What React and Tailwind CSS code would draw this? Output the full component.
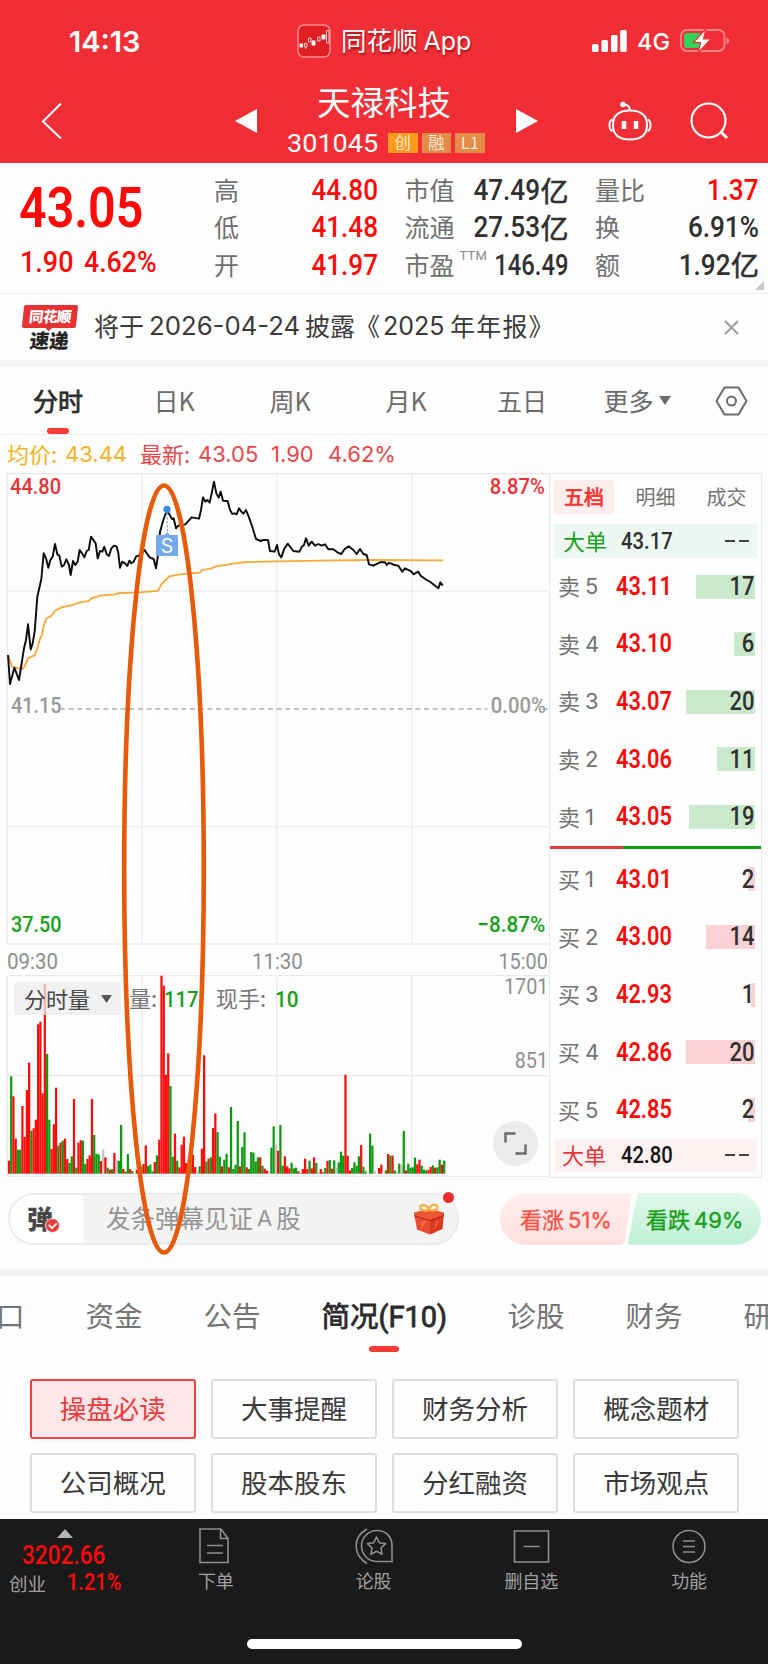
import React from 'react';

const PRICE =
  '24,900 30,987 43,938 57,975 72,880 78,855 84,808 92,883 98,865 104,830 112,725 124,672 131,595 138,610 145,638 151,615 158,605 165,567 172,598 178,602 185,635 192,630 199,613 207,630 212,660 219,618 226,630 233,620 239,585 246,595 253,607 260,588 266,585 273,545 287,565 293,610 300,588 307,590 313,575 320,598 327,603 334,580 342,572 350,575 355,595 360,638 367,620 375,625 382,633 388,617 394,625 401,620 408,605 420,600 434,585 442,598 450,608 461,612 468,640 474,600 480,530 490,495 501,465 508,478 516,492 521,490 528,520 535,512 556,508 575,487 597,491 603,465 609,427 616,440 622,435 629,443 635,415 642,380 649,415 656,428 662,410 669,437 683,438 690,465 697,477 704,475 710,478 717,460 724,470 730,476 738,465 746,485 755,510 768,552 782,558 790,555 804,555 810,588 824,590 831,570 837,598 844,607 852,583 863,566 880,588 898,590 906,575 912,570 918,550 926,572 935,560 945,572 955,567 965,572 975,568 985,583 1000,583 1012,592 1024,597 1034,582 1046,574 1060,585 1070,597 1080,582 1090,597 1100,600 1107,628 1120,632 1140,622 1155,622 1160,630 1166,624 1175,626 1182,630 1195,632 1207,650 1215,640 1235,650 1240,658 1255,650 1262,662 1280,675 1290,680 1315,700 1321,682 1328,692';

const AVERAGE =
  '24,900 36,935 66,943 73,935 84,910 104,900 112,880 120,852 126,840 132,808 140,790 155,782 165,767 185,757 210,752 240,742 265,738 275,730 300,722 340,719 360,714 410,713 474,708 484,688 508,664 540,658 600,653 606,645 635,640 648,634 700,626 740,621 830,619 960,617 1110,615 1330,616';

// one bar per minute: r = up, g = down, n = flat
const VOLUME =
  'r39 g292 r232 r105 g72 g72 r203 r110 r251 r333 g129 r136 r162 r448 r456 r241 r569 g359 g162 r74 r148 r258 g84 r93 g99 r105 r44 g32 g52 r224 g18 r93 r100 g99 g29 r44 r55 r224 g116 g60 g58 r38 n72 r49 g18 r12 g14 r62 n42 g39 g146 r14 g6 g59 r14 g8 n2 r12 r6 g22 r29 r85 g23 g27 g7 r35 g55 r102 r594 r564 r297 r361 g263 g51 r120 g39 r19 r87 r111 r32 r22 g27 r57 r20 n7 g22 r75 r355 g36 r45 g49 r137 r181 g125 g51 r22 g42 g60 r19 g200 g14 g27 g158 r22 g80 g124 r19 g14 g65 g63 g37 g49 r49 g24 r15 r9 n7 g78 g142 n87 r69 g146 g24 r52 r22 r16 g33 g16 g18 r7 g2 r14 r45 r14 g39 r16 r49 g32 n4 r14 r4 g17 r38 g41 r15 g40 n17 g34 g66 g54 r297 r54 r10 g17 g34 g24 g52 r86 g21 g7 n0 g120 g84 n10 n0 r17 r27 n0 g10 r59 g54 r54 g10 n6 g30 n27 g128 r10 g30 g18 g19 g48 r28 r42 g24 g12 g10 r12 r20 g25 r18 g19 g42 r27 g39'.split(' ');

const BAR_COLORS = { r: '#fe0b0b', g: '#0c9b10', n: '#c4c4c4' };

const SELLS = [
  ['卖', 5, '43.11', 17],
  ['卖', 4, '43.10', 6],
  ['卖', 3, '43.07', 20],
  ['卖', 2, '43.06', 11],
  ['卖', 1, '43.05', 19],
];

const BUYS = [
  ['买', 1, '43.01', 2],
  ['买', 2, '43.00', 14],
  ['买', 3, '42.93', 1],
  ['买', 4, '42.86', 20],
  ['买', 5, '42.85', 2],
];

const QUOTES = [
  [
    ['高', '44.80', '', 'text-[#fe0808]'],
    ['低', '41.48', '', 'text-[#fe0808]'],
    ['开', '41.97', '', 'text-[#fe0808]'],
  ],
  [
    ['市值', '47.49', '亿', 'text-[#303030]'],
    ['流通', '27.53', '亿', 'text-[#303030]'],
    ['市盈', '146.49', '', 'text-[#303030]'],
  ],
  [
    ['量比', '1.37', '', 'text-[#fe0808]'],
    ['换', '6.91%', '', 'text-[#303030]'],
    ['额', '1.92', '亿', 'text-[#303030]'],
  ],
];

const SECTIONS = ['操盘必读', '大事提醒', '财务分析', '概念题材', '公司概况', '股本股东', '分红融资', '市场观点'];

const StatusBar = () => (
  <div className="flex h-[78px] items-center pt-1">
    <div className="w-[297px] pl-[69px] font-['Inter'] text-[29px] leading-none font-semibold">14:13</div>
    <svg className="h-[34px] w-[34px]" viewBox="0 0 34 34" fill="none">
      <rect x="1" y="1" width="32" height="32" rx="6" fill="#e01f22" stroke="#fa8d8f" strokeWidth="1.5" />
      <path d="M3 20h2.500v3H3zM15 17h3v4h-3zM25 11h3v4h-3z" fill="#fff" stroke="#fff" />
      <path d="M7.500 19.500h2.500v3.500H7.500zM8.700 23v2M11.500 14h2.500v4h-2.500zM20.500 13h2.500v4h-2.500zM29.500 6.500h2.500v12.500h-2.500z" stroke="#f9c5c5" />
    </svg>
    <div className="-mt-[3px] ml-[10px] text-[25.5px] leading-none whitespace-nowrap [text-shadow:1px_2px_2px_rgba(90,0,0,0.55)]">
      同花顺<span className="ml-[6px] font-['Inter'] text-[25px]">App</span>
    </div>
    <div className="ml-auto flex items-center pr-[38px]">
      <svg className="h-[22px] w-[35px]" viewBox="0 0 35 22" fill="#fff">
        <rect x="0" y="14" width="6.500" height="8" rx="1.500" />
        <rect x="9.500" y="10" width="6.500" height="12" rx="1.500" />
        <rect x="19" y="5" width="6.500" height="17" rx="1.500" />
        <rect x="28.200" y="0" width="6.500" height="22" rx="1.500" />
      </svg>
      <span className="ml-[10px] w-[33px] pt-[2px] font-['Inter'] text-[23.5px] leading-none font-medium">4G</span>
      <svg className="ml-[10px] h-[26px] w-[50px]" viewBox="0 0 50 26">
        <rect x="1" y="2" width="43.500" height="21" rx="6" fill="none" stroke="#fa8589" strokeWidth="1.800" />
        <path d="M46.500 9.500q3 1 3 3.200t-3 3.300z" fill="#fa8589" />
        <rect x="4" y="5" width="17" height="15" rx="3" fill="#34d158" />
        <path d="M26 0.500L13.500 14.500h7l-2.500 10.500L31 11h-7.500z" fill="#fff" stroke="#f12e36" strokeWidth="1.200" />
      </svg>
    </div>
  </div>
);

const TitleBar = () => (
  <div className="flex h-[85px] items-start">
    <svg className="mt-[24px] ml-[41px] h-[38px] w-[21px]" viewBox="0 0 21 38" fill="none" stroke="#fff" strokeWidth="2">
      <path d="M20 1.500L2 19.500l18 17" />
    </svg>
    <svg className="mt-[31px] ml-[173px] h-[24px] w-[22px]" viewBox="0 0 22 24" fill="#fff">
      <path d="M22 0v24L0 12z" />
    </svg>
    <div className="ml-[30px] w-[198px]">
      <div className="mt-[3px] ml-[30px] text-[33.5px] leading-[40px] whitespace-nowrap">天禄科技</div>
      <div className="mt-[8px] flex items-center">
        <span className="w-[101px] font-['Roboto'] text-[26.5px] leading-[28px]">
          <span className="inline-block origin-left scale-x-[1.02]">301045</span>
        </span>
        <div className="flex gap-[4px] text-[16.5px] leading-[19px] text-[#ffe9d8]">
          <span className="h-[20px] w-[29.500px] bg-[#fd9a1b] text-center">创</span>
          <span className="h-[20px] w-[29.500px] bg-[#e38b48] text-center">融</span>
          <span className="h-[20px] w-[29.500px] bg-[#e38b48] text-center">L1</span>
        </div>
      </div>
    </div>
    <svg className="mt-[31px] ml-[31px] h-[24px] w-[22px]" viewBox="0 0 22 24" fill="#fff">
      <path d="M0 0v24L22 12z" />
    </svg>
    <svg className="mt-[23px] ml-[70px] h-[40px] w-[44px]" viewBox="0 0 44 40" fill="none" stroke="#fff" strokeWidth="2">
      <path d="M22 9.500c11 0 17 4.500 17 14.500S33 38.500 22 38.500 5 34 5 24 11 9.500 22 9.500z" />
      <path d="M4.500 18.500C.5 19.500.5 29 4.500 30M39.500 18.500c4 1 4 10.500 0 11.500M15 3.500c4.500 0 7 1.500 7 6" />
      <circle cx="15" cy="3.500" r="1.800" fill="#fff" />
      <path d="M16 20v8M28 20v8" strokeWidth="4.500" />
    </svg>
    <svg className="mt-[24px] ml-[38px] h-[38px] w-[38px]" viewBox="0 0 38 38" fill="none" stroke="#fff" strokeWidth="2.200">
      <circle cx="18.500" cy="18.500" r="17" />
      <path d="M30.500 29.500l6.500 6.500" strokeWidth="2.800" />
    </svg>
  </div>
);

const Quotes = () => (
  <div className="relative flex h-[131px] border-b border-[#ececec] pr-[8px]">
    <div className="w-[214px] font-['Roboto'] text-[#fe0808]">
      <div className="mt-[16px] ml-[19px] h-[58px] origin-left scale-x-[0.88] text-[55px] leading-[58px] font-semibold">43.05</div>
      <div className="mt-[9px] ml-[20px] flex text-[29px] leading-[32px] font-medium">
        <span className="w-[64px] origin-left scale-x-[0.93]">1.90</span>
        <span className="origin-left scale-x-[0.92]">4.62%</span>
      </div>
    </div>
    {QUOTES.map((col, i) => (
      <div key={i} className={`w-[164px] pt-[9px] ${i ? 'ml-[26.500px]' : ''}`}>
        {col.map(([label, value, unit, color]) => (
          <div key={label} className="flex h-[37.300px] items-center justify-between">
            <span className="relative -top-px text-[25px] leading-none text-[#707070]">
              {label}
              {label === '市盈' && (
                <sup className="absolute top-[-3px] left-[55px] font-['Roboto'] text-[13px] leading-none tracking-[0.200px] text-[#8a8a8a]">TTM</sup>
              )}
            </span>
            <span className={`flex items-center leading-none ${color}`}>
              <span className={`origin-right font-['Roboto'] text-[29px] font-medium ${value.length > 5 ? 'scale-x-[0.82]' : 'scale-x-[0.9]'}`}>{value}</span>
              {unit && <span className="relative -top-px text-[28px] [-webkit-text-stroke:0.6px]">{unit}</span>}
            </span>
          </div>
        ))}
      </div>
    ))}
    <svg className="absolute right-[4px] bottom-[3px] h-[9px] w-[9px]" viewBox="0 0 9 9">
      <path d="M9 0v9H0z" fill="#c8c8c8" />
    </svg>
  </div>
);

const News = () => (
  <div className="flex h-[66px] items-center">
    <div className="ml-[23px] w-[71px]">
      <div className="relative h-[23px] w-[54px] -skew-x-6 rounded-[2px] bg-[#e63233] text-center text-[14.5px] leading-[22px] font-black text-white">
        <span className="inline-block tracking-[-0.500px]">同花顺</span>
        <span className="absolute bottom-[-2px] left-[24px] h-[6px] w-[6px] rotate-45 bg-[#e63233]" />
      </div>
      <div className="mt-[2px] ml-[7px] h-[19px] w-[44px] -skew-x-6 text-[19.5px] leading-[19px] font-black text-[#252525]">速递</div>
    </div>
    <div className="-mt-[3px] flex text-[25px] leading-none whitespace-nowrap text-[#3a3a3a]">
      <span>将于</span>
      <span className="mr-[6px] ml-[5px] w-[150px] pt-px font-['Inter'] text-[25px]"><span className="inline-block origin-left scale-x-[1.03]">2026-04-24</span></span>
      <span className="w-[74px]">披露《</span>
      <span className="mr-[4px] ml-[4px] w-[63px] pt-px font-['Inter'] text-[25px]">2025</span>
      <span className="tracking-[1.200px]">年年报》</span>
    </div>
    <svg className="mr-[29px] ml-auto h-[15px] w-[15px]" viewBox="0 0 15 15" stroke="#999" strokeWidth="1.800">
      <path d="M1 1l13 13M14 1L1 14" />
    </svg>
  </div>
);

const ChartTabs = () => (
  <div className="flex h-[68px] items-center border-b border-[#ececec] text-[25px] leading-none text-[#6b6b6b]">
    <div className="relative w-[116px] text-center text-[#2b2b2b] [-webkit-text-stroke:0.8px]">
      分时
      <span className="absolute bottom-[-21px] left-[47px] h-[6px] w-[22px] rounded-[3px] bg-[#fb3a33]" />
    </div>
    {['日K', '周K', '月K', '五日'].map((t) => (
      <div key={t} className="w-[116px] text-center">{t}</div>
    ))}
    <div className="flex w-[114px] items-center justify-center">
      更多
      <svg className="ml-[5px] h-[9px] w-[12px]" viewBox="0 0 12 9" fill="#6b6b6b"><path d="M0 0h12L6 9z" /></svg>
    </div>
    <svg className="ml-[21px] h-[30px] w-[33px]" viewBox="0 0 33 30" fill="none" stroke="#6b6b6b" strokeWidth="2">
      <path d="M9.500 1.500h14L31.500 15l-8 13.500h-14L1.500 15z" strokeLinejoin="round" />
      <circle cx="16.500" cy="15" r="4.500" />
    </svg>
  </div>
);

const PriceChart = () => (
  <div className="relative h-[472px] font-['Roboto'] text-[22px] leading-none font-medium">
    <svg className="block h-[472px] w-[549px]" viewBox="0 354 1647 1416" fill="none">
      <path d="M22 354V1767M426 354V1767M830 354V1767M1235 354V1767M22 708H1647M22 1415H1647M22 1767H1647" stroke="#ededed" strokeWidth="4" />
      <path d="M22 355.500H1647" stroke="#e8e8e8" strokeWidth="4" />
      <path d="M180 1062H1462M1628 1062H1647" stroke="#888" strokeWidth="3.500" strokeDasharray="15 11" />
      <polyline points={AVERAGE} stroke="#f8a93a" strokeWidth="5.500" />
      <polyline points={PRICE} stroke="#0c0c0c" strokeWidth="5.800" strokeLinejoin="round" />
      <path d="M502 475V540" stroke="#7fb0f2" strokeWidth="4" strokeDasharray="6 6" />
      <path d="M490 545l12-14 12 14z" fill="#72a8f0" />
      <circle cx="501" cy="463" r="11" fill="#3f8ae8" />
    </svg>
    <span className="absolute top-[62px] left-[156px] h-[21px] w-[22px] bg-[#74a9ef] text-center font-['Inter'] text-[19.5px] leading-[22px] font-normal text-white">S</span>
    <span className="absolute top-[3px] left-[10px] origin-left scale-x-[0.91] text-[#ea3439]">44.80</span>
    <span className="absolute top-[3px] right-[4px] origin-right scale-x-[0.92] text-[#ea3439]">8.87%</span>
    <span className="absolute top-[222px] left-[11px] origin-left scale-x-[0.9] text-[#9a9a9a]">41.15</span>
    <span className="absolute top-[222px] right-[3px] origin-right scale-x-[0.92] text-[#9a9a9a]">0.00%</span>
    <span className="absolute top-[441px] left-[11px] origin-left scale-x-[0.9] text-[#17a01b]">37.50</span>
    <span className="absolute top-[441px] right-[4px] origin-right scale-x-[0.94] text-[#17a01b]">−8.87%</span>
  </div>
);

const VolumeChart = () => (
  <div className="relative h-[202px]">
    <svg className="block h-[202px] w-[549px]" viewBox="0 226 1647 606" fill="none">
      <path d="M22 228V830M426 228V830M830 228V830M1235 228V830M22 228H1647M22 528H1647M22 830H1647" stroke="#eaeaea" strokeWidth="4" />
      {VOLUME.map((v, i) => {
        const h = Number(v.slice(1));
        return <rect key={i} x={23.5 + i * 6.73} y={822 - h} width="6.730" height={h} fill={BAR_COLORS[v[0]]} />;
      })}
    </svg>
    <div className="absolute top-[7px] left-[14px] flex h-[33px] w-[107px] items-center rounded-[3px] bg-[#ececec]/75 pb-[2px] pl-[10px] text-[22px] leading-none text-[#4a4a4a]">
      分时量
      <svg className="mt-[2px] ml-[11px] h-[8px] w-[11px]" viewBox="0 0 11 8" fill="#555"><path d="M0 0h11L5.500 8z" /></svg>
    </div>
    <div className="absolute top-[11px] left-[129px] flex text-[22px] leading-none text-[#757575]">
      <span className="w-[35px] whitespace-nowrap">量:</span>
      <span className="w-[52px] pt-[2px] font-['Roboto'] text-[22.5px] text-[#17a01b]"><span className="inline-block origin-left scale-x-[0.9] font-medium">117</span></span>
      <span className="w-[59px] whitespace-nowrap">现手:</span>
      <span className="pt-[2px] font-['Roboto'] text-[22.5px] text-[#17a01b]"><span className="inline-block origin-left scale-x-[0.92] font-medium">10</span></span>
    </div>
    <span className="absolute top-[1px] right-[1px] origin-right scale-x-[0.9] font-['Roboto'] text-[22px] leading-none text-[#8f8f8f]">1701</span>
    <span className="absolute top-[75px] right-[1px] origin-right scale-x-[0.9] font-['Roboto'] text-[22px] leading-none text-[#8f8f8f]">851</span>
    <div className="absolute top-[146px] left-[493px] flex h-[45px] w-[45px] items-center justify-center rounded-full bg-[#ebebeb]">
      <svg className="h-[23px] w-[23px]" viewBox="0 0 23 23" fill="none" stroke="#6a6a6a" strokeWidth="2.500">
        <path d="M1.500 10.500v-9h10M21.500 12.500v9h-10" />
      </svg>
    </div>
  </div>
);

const DepthRow = ({ row, barColor }) => {
  const [side, level, price, count] = row;
  return (
    <div className="relative flex h-[57.600px] items-center pr-[7px] pb-[1px] pl-[8px] leading-none">
      <span className="absolute top-[16.500px] right-[6.500px] h-[24px]" style={{ width: count * 3.45, backgroundColor: barColor }} />
      <span className="w-[27px] pb-[2px] text-[22px] text-[#727272]">{side}</span>
      <span className="w-[31px] font-['Inter'] text-[22px] text-[#727272]">{level}</span>
      <span className="origin-left scale-x-[0.87] font-['Roboto'] text-[25px] font-semibold text-[#fe0808]">{price}</span>
      <span className="relative ml-auto origin-right scale-x-[0.88] font-['Roboto'] text-[25px] font-medium text-[#303030]">{count}</span>
    </div>
  );
};

const Depth = () => (
  <div className="w-[213px] border border-[#e8e8e8]">
    <div className="flex h-[50px] items-center pb-[4px] pl-[4px] text-[20px] leading-none text-[#757575]">
      <span className="flex h-[34px] w-[60px] items-center justify-center rounded-[2px] bg-[#fdeeed] pb-px text-[#fa322f] [-webkit-text-stroke:0.7px]">五档</span>
      <span className="w-[83px] pb-px text-center">明细</span>
      <span className="w-[59px] pb-px text-center">成交</span>
    </div>
    <div className="mx-[4px] flex h-[34px] items-center bg-[#eef8f3] pr-[8px] pl-[9px] text-[22px] leading-none">
      <span className="w-[58px] pb-[2px] text-[#17a01b]">大单</span>
      <span className="origin-left scale-x-[0.88] font-['Roboto'] text-[23px] font-medium text-[#303030]">43.17</span>
      <span className="ml-auto flex gap-[4px]">
        <i className="h-[2px] w-[10px] bg-[#444]" /><i className="h-[2px] w-[10px] bg-[#444]" />
      </span>
    </div>
    {SELLS.map((r) => <DepthRow key={r[1]} row={r} barColor="#cae9cb" />)}
    <div className="mb-[2px] flex h-[3px]">
      <div className="w-[73px] bg-[#e43a3c]" />
      <div className="flex-1 bg-[#0c9b10]" />
    </div>
    {BUYS.map((r) => <DepthRow key={r[1]} row={r} barColor="#fad2d3" />)}
    <div className="mx-[4px] flex h-[33px] items-center bg-[#fef1f1] pr-[8px] pl-[8px] text-[22px] leading-none">
      <span className="w-[59px] pb-[2px] text-[#ea3439]">大单</span>
      <span className="origin-left scale-x-[0.88] font-['Roboto'] text-[23px] font-medium text-[#151515]">42.80</span>
      <span className="ml-auto flex gap-[4px]">
        <i className="h-[2px] w-[10px] bg-[#444]" /><i className="h-[2px] w-[10px] bg-[#444]" />
      </span>
    </div>
  </div>
);

const Danmaku = () => (
  <div className="flex h-[91px] items-start pt-[15px] pr-[7px] pl-[8px]">
    <div className="relative flex h-[52px] w-[451px] rounded-full border-2 border-[#ececec] bg-[#f4f4f4]">
      <div className="relative h-full w-[73px] rounded-l-full bg-white pl-[17px] text-[26px] leading-[45px] font-black text-[#484848]">
        弹
        <svg className="absolute top-[23px] left-[35px] h-[15px] w-[15px]" viewBox="0 0 14 14">
          <circle cx="7" cy="7" r="6.500" fill="#ea3b3c" stroke="#fff" strokeWidth="0.8" />
          <path d="M3.500 6.500l3 3 4.500-4.500" fill="none" stroke="#fff" strokeWidth="1.600" />
        </svg>
      </div>
      <div className="flex items-center pb-[2px] pl-[23px] text-[24.5px] leading-none whitespace-nowrap text-[#959595]">
        发条弹幕见证<span className="mx-[4px] font-['Inter'] text-[22px]">A</span>股
      </div>
      <svg className="absolute top-[7px] left-[402px] h-[34px] w-[34px]" viewBox="0 0 34 34">
        <path d="M2 11l16 5v16.500L5 27.500z" fill="#ea4a2d" />
        <path d="M18 16l14-5-1.500 16L18 32.500z" fill="#dc3823" />
        <path d="M2 10.500L17 7l15 3.500-.3 3L18 18.500 2.300 14z" fill="#ee5536" />
        <path d="M2.300 14L18 18.500l14-5" fill="none" stroke="#b92318" />
        <path d="M9 20l6-2-6 10zM27 18l-5 12 2-11z" fill="#f58a4a" opacity="0.5" />
        <path d="M17 8C11 9.500 7 7 8.500 4.500s7-2 8.500 3.500c1-5.500 6-6.500 8-4S24 9.500 17 8z" fill="none" stroke="#f3b040" strokeWidth="2.300" />
      </svg>
      <span className="absolute top-[-3px] right-[3px] h-[11px] w-[11px] rounded-full bg-[#e8302f]" />
    </div>
    <div className="relative ml-auto h-[52px] w-[261px] leading-[50px]">
      <svg className="block h-[52px] w-[261px]" viewBox="0 0 262 52">
        <defs>
          <linearGradient id="up" x1="0" y1="0" x2="0" y2="1">
            <stop offset="0" stopColor="#feefee" /><stop offset="1" stopColor="#fde0dd" />
          </linearGradient>
          <linearGradient id="down" x1="0" y1="0" x2="0" y2="1">
            <stop offset="0" stopColor="#e0f8eb" /><stop offset="1" stopColor="#c0f0d6" />
          </linearGradient>
        </defs>
        <path d="M26 0h103q4 0 3 4l-7 44q-1 4-5 4H26a26 26 0 0 1 0-52z" fill="url(#up)" />
        <path d="M142 0h94a26 26 0 0 1 0 52H132q-4 0-3-4l8-44q1-4 5-4z" fill="url(#down)" />
      </svg>
      <div className="absolute inset-0 flex text-[22px] whitespace-nowrap">
        <span className="w-[127px] pl-[20px] text-[#fb5146] [-webkit-text-stroke:0.3px]">看涨<span className="ml-[4px] font-['Inter'] text-[22px]">51%</span></span>
        <span className="pl-[19px] text-[#17a01b] [-webkit-text-stroke:0.4px]">看跌<span className="ml-[4px] font-['Inter'] text-[22px]">49%</span></span>
      </div>
    </div>
  </div>
);

const NavItem = ({ label, children }) => (
  <div className="flex flex-1 flex-col items-center pt-[8px]">
    <svg className="h-[38px] w-[40px]" viewBox="0 0 40 38" fill="none" stroke="#8e8e8e" strokeWidth="1.600">{children}</svg>
    <span className="mt-[6px] text-[18px] leading-[18px] text-[#a0a0a0]">{label}</span>
  </div>
);

const BottomBar = () => (
  <div className="flex h-[146px] flex-col bg-[#1a1a1a]">
    <div className="flex h-[80px]">
      <div className="w-[137px] font-['Roboto'] text-[#fe0808]">
        <svg className="mt-[10px] ml-[57px] h-[9px] w-[16px]" viewBox="0 0 16 9" fill="#b5b5b5"><path d="M8 0l8 9H0z" /></svg>
        <div className="mt-[4px] ml-[22px] origin-left scale-x-[0.87] text-[26px] leading-[26px] font-medium">3202.66</div>
        <div className="mt-[4px] flex items-center pl-[9px] leading-[22px]">
          <span className="w-[58px] font-['Noto_Sans_CJK_SC'] text-[18.5px] text-[#a0a0a0]">创业</span>
          <span className="origin-left scale-x-[0.87] text-[23px] font-medium">1.21%</span>
        </div>
      </div>
      <NavItem label="下单">
        <path d="M4 2h21l7 9.500v24H4zM24.500 2v9.500H32M11 18.500h16M11 26h16" />
      </NavItem>
      <NavItem label="论股">
        <path d="M23 3.500c9 0 15 6.500 15 15.500v15.500H23A15.500 15.500 0 0 1 23 3.500zM13 2C-1.500 10-1.500 28 13 36.500" />
        <path d="M22.500 10l2.800 5.700 6.200.9-4.500 4.400 1 6.300-5.500-3-5.600 3 1.100-6.300-4.500-4.400 6.200-.9z" strokeLinejoin="round" />
      </NavItem>
      <NavItem label="删自选">
        <path d="M3.500 4h34v31h-34zM12.500 19.500h16" />
      </NavItem>
      <NavItem label="功能">
        <circle cx="20" cy="19.500" r="16" />
        <path d="M14 14h12M14 19.500h12M14 25h12" />
      </NavItem>
    </div>
    <div className="mx-auto mt-[40px] h-[10px] w-[275px] rounded-full bg-white" />
  </div>
);

const App = () => {
  return (
    <div className="relative h-[1664px] w-[768px] overflow-hidden bg-[#fefefe] font-['Noto_Sans_CJK_SC',sans-serif]">
      <div className="h-[163px] bg-[#f12e36] text-white">
        <StatusBar />
        <TitleBar />
      </div>
      <Quotes />
      <News />
      <div className="h-[7px] bg-[#f3f3f3]" />
      <ChartTabs />
      <div className="flex h-[38px] items-center pl-[7px] text-[22px] leading-none whitespace-nowrap text-[#e8474b]">
        <span className="w-[58px] pb-[2px] text-[#f5b125]">均价:</span>
        <span className="w-[75px] font-['Inter'] text-[#f5b125]">43.44</span>
        <span className="w-[58px] pb-[2px]">最新:</span>
        <span className="w-[73px] font-['Inter']">43.05</span>
        <span className="w-[57px] font-['Inter']">1.90</span>
        <span className="font-['Inter']">4.62%</span>
      </div>
      <div className="flex h-[705px]">
        <div className="w-[549px]">
          <PriceChart />
          <div className="relative flex h-[30px] items-center justify-between pt-[3px] pr-[1px] pl-[7px] font-['Roboto'] text-[22px] leading-none text-[#8f8f8f]">
            <span className="origin-left scale-x-[0.93]">09:30</span>
            <span className="scale-x-[0.93]">11:30</span>
            <span className="origin-right scale-x-[0.9]">15:00</span>
          </div>
          <VolumeChart />
        </div>
        <Depth />
      </div>
      <Danmaku />
      <div className="h-[7px] bg-[#f3f3f3]" />
      <div className="relative flex h-[103px] justify-center gap-[61px] pt-[23px] text-[28.500px] leading-[32px] whitespace-nowrap text-[#757575]">
        <span>口</span>
        <span>资金</span>
        <span>公告</span>
        <span className="relative text-[#2b2b2b] [-webkit-text-stroke:0.8px]">
          简况<span className="inline-block w-[68px] font-['Roboto'] text-[29px]">(F10)</span>
          <span className="absolute top-[47px] left-1/2 h-[6px] w-[30px] -translate-x-1/2 rounded-[3px] bg-[#fb3a33]" />
        </span>
        <span>诊股</span>
        <span>财务</span>
        <span>研</span>
      </div>
      <div className="grid h-[140px] grid-cols-4 content-start gap-x-[15.500px] gap-y-[14.500px] pr-[29px] pl-[30px] text-[26.500px] leading-none">
        {SECTIONS.map((s, i) => (
          <button
            key={s}
            className={`h-[59.500px] rounded-[3px] border-2 pb-[2px] ${i === 0 ? 'border-[#ee4043] bg-[#fde7e8] text-[#ec3a3c]' : 'border-[#dedede] text-[#3a3a3a]'}`}
          >
            {s}
          </button>
        ))}
      </div>
      <BottomBar />
      <svg className="pointer-events-none absolute top-[480px] left-[118px] h-[780px] w-[92px]" viewBox="118 480 92 780" fill="none">
        <ellipse cx="164" cy="869" rx="39.800" ry="383.500" stroke="#e9590a" strokeWidth="4.600" />
      </svg>
    </div>
  );
};

export default App;
